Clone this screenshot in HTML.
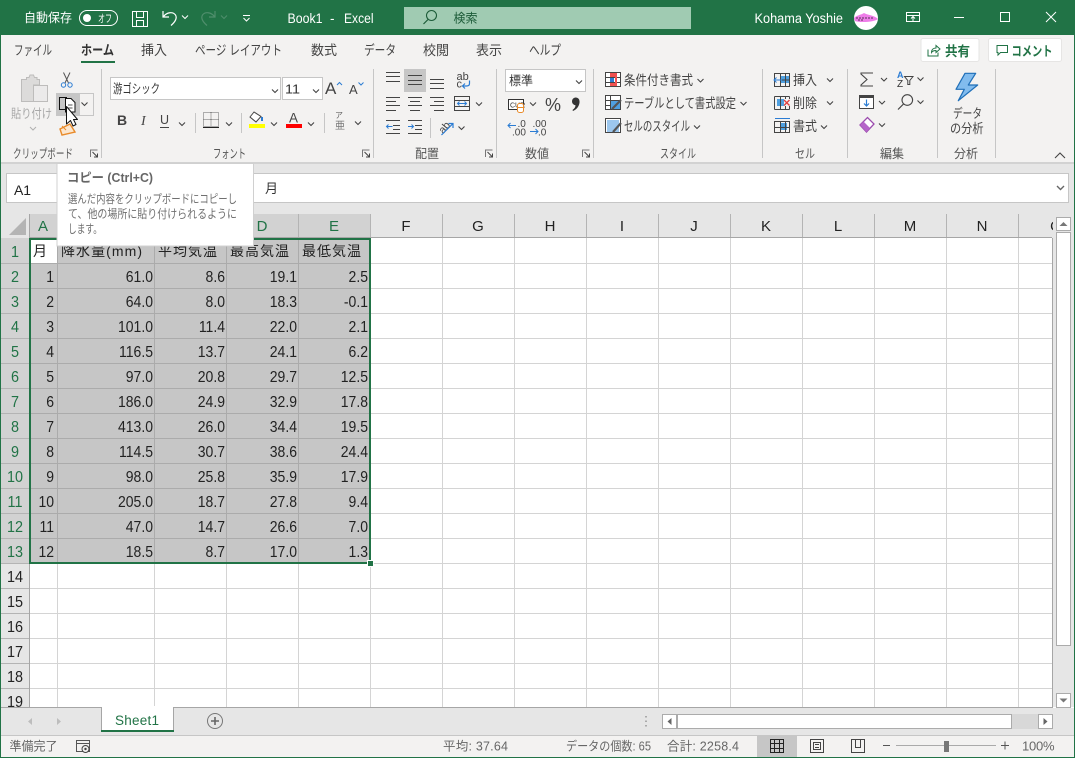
<!DOCTYPE html>
<html lang="ja"><head><meta charset="utf-8"><title>Book1 - Excel</title>
<style>
html,body{margin:0;padding:0;background:#fff}
svg{display:block}
text{font-family:"Liberation Sans","Noto Sans CJK JP",sans-serif;font-size:12px;fill:#444}
.t{font-size:13.500px;fill:#444}
.g{font-size:12.500px;fill:#555}
.w{fill:#fff}
.n{font-size:16px;fill:#222;text-anchor:end}
.h{font-size:15px;fill:#222;text-anchor:middle}
.hg{font-size:15px;fill:#217346;text-anchor:middle}
.rh{font-size:16px;fill:#222;text-anchor:middle}
.rg{font-size:16px;fill:#217346;text-anchor:middle}
.st{font-size:12.500px;fill:#666}
.c{shape-rendering:crispEdges}
</style></head><body>
<svg xmlns="http://www.w3.org/2000/svg" width="1075" height="758" viewBox="0 0 1075 758">
<defs>
<path id="v" d="M-3 -1.500L0 1.500L3 -1.500" fill="none" stroke="#444" stroke-width="1.100"/>
<g id="lau"><path d="M-3.500 3.500V-3.500H3.500" fill="none" stroke="#777"/><path d="M-1.500 -1.500L3.500 3.500M3.500 0V3.500H0" fill="none" stroke="#444"/></g>
</defs>

<!-- base regions -->
<g class="c">
<rect width="1075" height="758" fill="#fff"/>
<rect width="1075" height="35" fill="#217346"/>
<rect y="35" width="1075" height="128" fill="#f3f2f1"/>
<rect y="162" width="1075" height="2" fill="#d2d2d2"/>
<rect y="164" width="1075" height="50" fill="#e6e6e6"/>
<rect x="6.500" y="173.500" width="1062" height="29" fill="#fff" stroke="#c6c6c6"/>
<rect y="214" width="1075" height="24" fill="#e6e6e6"/>
<rect y="238" width="29" height="469" fill="#e6e6e6"/>
</g>

<!-- title bar -->
<text x="24" y="22" class="w" style="font-size:12.500px" textLength="48" lengthAdjust="spacingAndGlyphs">自動保存</text>
<rect x="79.500" y="10.500" width="38" height="15" rx="7.500" fill="none" stroke="#fff"/>
<circle cx="87" cy="18" r="4" fill="#fff"/>
<text x="98" y="22" class="w" style="font-size:10.500px" textLength="14" lengthAdjust="spacingAndGlyphs">オフ</text>
<path class="c" d="M132.500 11.500H147.500V26.500H132.500ZM136.500 11.500V17.500H143.500V11.500M136.500 26.500V20.500H143.500V26.500" fill="none" stroke="#fff"/>
<path d="M163 11V17H169M163.500 16.500C167 12 173 11.500 175.500 15C177.500 18.500 175 22 171 25.500" fill="none" stroke="#fff" stroke-width="1.200"/>
<path d="M182 15.500L185 18.500L188 15.500" fill="none" stroke="#fff"/>
<path d="M215 11V17H209M214.500 16.500C211 12 205 11.500 202.500 15C200.500 18.500 203 22 207 25.500" fill="none" stroke="#4f8e6c" stroke-width="1.200"/>
<path d="M221 15.500L224 18.500L227 15.500" fill="none" stroke="#4f8e6c"/>
<path d="M243 15.500H250M243.500 18L246.500 21L249.500 18" fill="none" stroke="#fff"/>
<text x="287.500" y="23" class="w" style="font-size:13.500px" textLength="35" lengthAdjust="spacingAndGlyphs">Book1</text>
<text x="330" y="23" class="w" style="font-size:13.500px">-</text>
<text x="344" y="23" class="w" style="font-size:13.500px" textLength="29.500" lengthAdjust="spacingAndGlyphs">Excel</text>
<rect x="404" y="7" width="287" height="22" fill="#a0cbb2" class="c"/>
<circle cx="431.500" cy="15.500" r="5" fill="none" stroke="#1d5c39" stroke-width="1.100"/>
<path d="M428 19.500L423.500 24" stroke="#1d5c39" stroke-width="1.200"/>
<text x="453.500" y="22.500" style="font-size:12.500px;fill:#1d5c39" textLength="24" lengthAdjust="spacingAndGlyphs">検索</text>
<text x="754.500" y="23" class="w" style="font-size:13.500px" textLength="88.500" lengthAdjust="spacingAndGlyphs">Kohama Yoshie</text>
<circle cx="866" cy="18" r="12" fill="#fff"/>
<path d="M854 18C857 15 861 15 864 13C867 15 874 15 878 19C875 22 860 23 855 21Z" fill="#ee7de8"/>
<path d="M856 18H874M858 20H864" stroke="#222" stroke-dasharray="2 1" stroke-width=".8"/>
<g fill="none" stroke="#fff">
<path class="c" d="M906.500 12.500H919.500V21.500H906.500ZM906.500 15.500H919.500"/>
<path d="M913 21V17M911 18.500L913 16.500L915 18.500"/>
<path class="c" d="M954 17.500H964"/>
<rect class="c" x="1000.500" y="12.500" width="9" height="9"/>
<path d="M1046 12L1056 22M1056 12L1046 22"/>
</g>

<!-- tabs -->
<text x="14" y="55" class="t" textLength="38" lengthAdjust="spacingAndGlyphs">ファイル</text>
<text x="81" y="55" class="t" style="font-weight:700;fill:#333" textLength="33" lengthAdjust="spacingAndGlyphs">ホーム</text>
<rect x="81" y="61" width="34" height="2" fill="#217346" class="c"/>
<text x="141" y="55" class="t" textLength="26" lengthAdjust="spacingAndGlyphs">挿入</text>
<text x="195" y="55" class="t" textLength="87" lengthAdjust="spacingAndGlyphs">ページ レイアウト</text>
<text x="311" y="55" class="t" textLength="26" lengthAdjust="spacingAndGlyphs">数式</text>
<text x="364" y="55" class="t" textLength="32" lengthAdjust="spacingAndGlyphs">データ</text>
<text x="423" y="55" class="t" textLength="26" lengthAdjust="spacingAndGlyphs">校閲</text>
<text x="476" y="55" class="t" textLength="26" lengthAdjust="spacingAndGlyphs">表示</text>
<text x="529" y="55" class="t" textLength="32" lengthAdjust="spacingAndGlyphs">ヘルプ</text>

<!-- share / comment -->
<rect x="921" y="38.500" width="58" height="23" rx="2" fill="#fff" stroke="#e6e5e4"/>
<rect x="988.500" y="38.500" width="73" height="23" rx="2" fill="#fff" stroke="#e6e5e4"/>
<path d="M928 49.500V56H938V52.500M931.500 52.500C931.500 49.500 933.500 48 936 48V45.500L940 49L936 52.500V50.500C934 50.500 932.500 51 931.500 52.500Z" fill="none" stroke="#217346"/>
<text x="945" y="56" style="font-size:13.500px;font-weight:700;fill:#217346" textLength="25" lengthAdjust="spacingAndGlyphs">共有</text>
<path d="M997 45.500H1007.500V52.500H1000.500L998 55V52.500H997Z" fill="none" stroke="#217346"/>
<text x="1011.500" y="56" style="font-size:13.500px;font-weight:700;fill:#217346" textLength="41" lengthAdjust="spacingAndGlyphs">コメント</text>

<!-- group separators -->
<path class="c" d="M101.500 69V158M373.500 69V158M496.500 69V158M593.500 69V158M762.500 69V158M847.500 69V158M937.500 69V158M995.500 69V158" stroke="#c6c6c6" fill="none"/>
<text x="13" y="158" class="g" textLength="60" lengthAdjust="spacingAndGlyphs">クリップボード</text>
<text x="213" y="158" class="g" textLength="33" lengthAdjust="spacingAndGlyphs">フォント</text>
<text x="415" y="158" class="g" textLength="24" lengthAdjust="spacingAndGlyphs">配置</text>
<text x="525" y="158" class="g" textLength="24" lengthAdjust="spacingAndGlyphs">数値</text>
<text x="660" y="158" class="g" textLength="36" lengthAdjust="spacingAndGlyphs">スタイル</text>
<text x="795" y="158" class="g" textLength="20" lengthAdjust="spacingAndGlyphs">セル</text>
<text x="880" y="158" class="g" textLength="24" lengthAdjust="spacingAndGlyphs">編集</text>
<text x="954" y="158" class="g" textLength="24" lengthAdjust="spacingAndGlyphs">分析</text>
<use href="#lau" x="94" y="153.500"/><use href="#lau" x="366" y="153.500"/><use href="#lau" x="489" y="153.500"/><use href="#lau" x="586" y="153.500"/>
<path d="M1055 158L1060 153L1065 158" fill="none" stroke="#444" stroke-width="1.100"/>

<!-- clipboard group -->
<path d="M21.500 79.500H26.500V77.500H29L30 75H33.500L34.500 77.500H37V79.500H39.500V85H33.500V101.500H21.500Z" fill="#dcdbda" stroke="#bdbcbb"/>
<rect x="33.500" y="85.500" width="14" height="16" fill="#ebeaea" stroke="#bdbcbb"/>
<text x="11" y="118" style="font-size:12.500px;fill:#a8a8a8" textLength="41" lengthAdjust="spacingAndGlyphs">貼り付け</text>
<path d="M30 127L33 130L36 127" fill="none" stroke="#b0b0b0"/>
<path d="M63.500 72.500L68.500 83M70 72.500L65 83" stroke="#555" fill="none"/>
<circle cx="63.500" cy="85" r="2.200" fill="none" stroke="#2b7cd3"/><circle cx="70" cy="85" r="2.200" fill="none" stroke="#2b7cd3"/>
<rect x="56" y="93" width="23" height="23" fill="#c6c6c6" class="c"/>
<rect x="79.500" y="93.500" width="14" height="22" fill="none" stroke="#c6c6c6" class="c"/>
<use href="#v" x="84.500" y="104"/>
<path class="c" d="M59.500 97.500H66.500V109.500H59.500Z" fill="none" stroke="#111"/>
<path d="M65.500 98.500H71L75 102.500V112H65.500Z" fill="#fff" stroke="#111"/>
<path d="M68 105H72.500M68 108H72.500" stroke="#555"/>
<path d="M60 129L70 124L75 132L62 135Z" fill="#fbe6ce" stroke="#e98b2a" stroke-width="1.400"/>
<path d="M66 130L62 126" stroke="#e98b2a"/>
<path d="M66.500 106.500V124L70.500 120.500L73 126L76 124.500L73.500 119.500H77.500Z" fill="#fff" stroke="#111" stroke-linejoin="round"/>

<!-- font group -->
<rect x="110.500" y="77.500" width="170" height="22" fill="#fff" stroke="#c6c6c6" class="c"/>
<rect x="282.500" y="77.500" width="40" height="22" fill="#fff" stroke="#c6c6c6" class="c"/>
<text x="113" y="93" style="font-size:12.500px;fill:#333" textLength="47" lengthAdjust="spacingAndGlyphs">游ゴシック</text>
<use href="#v" x="275" y="91"/>
<text x="285" y="93.500" style="font-size:13px;fill:#333" textLength="15" lengthAdjust="spacingAndGlyphs">11</text>
<use href="#v" x="316" y="91"/>
<text x="325" y="94" style="font-size:17px;fill:#444">A</text>
<path d="M337 85L339.500 82.500L342 85" fill="none" stroke="#2b7cd3"/>
<text x="349" y="94" style="font-size:13px;fill:#444">A</text>
<path d="M358.500 82.500L361 85L363.500 82.500" fill="none" stroke="#2b7cd3"/>
<text x="117" y="125" style="font-size:14px;font-weight:700;fill:#444">B</text>
<text x="141" y="125" style="font-size:14px;font-style:italic;fill:#444;font-family:'Liberation Serif',serif">I</text>
<text x="160" y="124" style="font-size:12.500px;fill:#444">U</text>
<path class="c" d="M160 127.500H169" stroke="#444"/>
<use href="#v" x="182" y="124"/>
<path class="c" d="M195.500 113V133M241.500 113V133M324.500 113V133" stroke="#c6c6c6"/>
<path class="c" d="M203.500 112.500H218.500V126.500H203.500ZM211 112.500V126.500M203.500 119.500H218.500" fill="none" stroke="#666" stroke-dasharray="1 1"/>
<path class="c" d="M203 127.500H219" stroke="#222"/>
<use href="#v" x="229" y="124"/>
<path d="M254 112L250 117L256 122L261 116.500Z" fill="#fff" stroke="#444"/><path d="M262 117V121" stroke="#2b7cd3" stroke-width="2"/>
<rect x="249" y="124" width="16" height="4" fill="#ff0" class="c"/>
<use href="#v" x="274" y="124"/>
<text x="289" y="122.500" style="font-size:13.500px;fill:#444">A</text>
<rect x="286" y="124" width="16" height="4" fill="#f00" class="c"/>
<use href="#v" x="311" y="124"/>
<text x="335" y="118" style="font-size:8px;fill:#666">ア</text>
<text x="335" y="129" style="font-size:10px;fill:#777">亜</text>
<use href="#v" x="358" y="123"/>

<!-- alignment -->
<rect x="404" y="69" width="22" height="23" fill="#c6c6c6" class="c"/>
<g class="c" fill="none" stroke="#444">
<path d="M386 72.500H400M386 76.500H400M386 81.500H400M408 75.500H422M408 80.500H422M408 84.500H422M430 79.500H444M430 83.500H444M430 88.500H444"/>
<path d="M386 97.500H400M386 101.500H396M386 105.500H400M386 110.500H396M408 97.500H422M410 101.500H420M408 105.500H422M410 110.500H420M430 97.500H444M434 101.500H444M430 105.500H444M434 110.500H444"/>
<path d="M386 120.500H400M393 125.500H400M393 129.500H400M386 133.500H400M408 120.500H422M415 125.500H422M415 129.500H422M408 133.500H422"/>
<path d="M430.500 118V138" stroke="#c6c6c6"/>
<path d="M454.500 96.500H469.500V110.500H454.500ZM454.500 100.500H469.500M454.500 106.500H469.500"/>
</g>
<path d="M457.500 103.500H466.500M459.500 101.500L457.500 103.500L459.500 105.500M464.500 101.500L466.500 103.500L464.500 105.500" stroke="#2b7cd3" fill="none"/>
<use href="#v" x="479" y="104"/>
<text x="456.500" y="80" style="font-size:11px;fill:#444">ab</text>
<text x="456.500" y="87.500" style="font-size:11px;fill:#444">c</text>
<path d="M469.500 80.500V83.500C469.500 85.500 468 86 466.500 86H463M465 83.500L462.500 86L465 88.500" fill="none" stroke="#2b7cd3" stroke-width="1.200"/>
<path d="M386.500 126.500H392.500M388.500 124.500L386.500 126.500L388.500 128.500M413.500 126.500H408M411.500 124.500L413.500 126.500L411.500 128.500" stroke="#2b7cd3" fill="none"/>
<text x="438" y="131" style="font-size:10.500px;fill:#444" transform="rotate(-50 444 127)">ab</text>
<path d="M441.500 135L453 123.500M448.500 123.500H453V128" fill="none" stroke="#2b7cd3" stroke-width="1.200"/>
<use href="#v" x="461.500" y="128"/>

<!-- number -->
<rect x="505.500" y="69.500" width="80" height="22" fill="#fff" stroke="#c6c6c6" class="c"/>
<text x="509" y="85" style="font-size:12.500px;fill:#333" textLength="24" lengthAdjust="spacingAndGlyphs">標準</text>
<use href="#v" x="579" y="82"/>
<rect x="508.500" y="99.500" width="15" height="10" fill="#fff" stroke="#333" class="c"/>
<text x="510" y="107.500" style="font-size:7px;fill:#333">CUR</text>
<rect x="517.500" y="103.500" width="6" height="9" rx="2" fill="#fff" stroke="#e98b2a"/>
<path d="M518 107.500H523" stroke="#e98b2a"/>
<use href="#v" x="533" y="104"/>
<text x="545" y="111" style="font-size:18px;fill:#444">%</text>
<path d="M572 101.500A3.700 3.700 0 0 1 579.500 101C580 105 577 109.500 573 111L572.500 110C574.500 108.500 575.500 107 575.500 105.200A3.700 3.700 0 0 1 572 101.500Z" fill="#333"/>
<text x="517.500" y="127" style="font-size:10px;fill:#444">.0</text>
<text x="512" y="135.500" style="font-size:10px;fill:#444">.00</text>
<path d="M508 125.500H516M510.500 123L508 125.500L510.500 128" stroke="#2b7cd3" fill="none"/>
<text x="532.500" y="127" style="font-size:10px;fill:#444">.00</text>
<text x="538" y="135.500" style="font-size:10px;fill:#444">.0</text>
<path d="M530 131.500H538M535.500 129L538 131.500L535.500 134" stroke="#2b7cd3" fill="none"/>

<!-- styles -->
<g class="c">
<rect x="605.500" y="72.500" width="15" height="14" fill="#fff" stroke="#444"/>
<path d="M610.500 72.500V86.500M615.500 72.500V86.500M605.500 77.500H620.500M605.500 82.500H620.500" stroke="#444"/>
<rect x="610" y="73" width="7" height="4" fill="#f05050"/><rect x="610" y="83" width="7" height="3" fill="#f05050"/><rect x="615" y="73" width="2" height="13" fill="#f05050"/><rect x="610" y="78" width="4" height="4" fill="#2b7cd3"/>
<rect x="605.500" y="95.500" width="15" height="14" fill="#fff" stroke="#444"/>
<path d="M610.500 95.500V109.500M605.500 100.500H620.500M605.500 105.500H620.500" stroke="#444"/>
<rect x="611" y="101" width="9" height="8" fill="#4fa0e0"/>
<rect x="605.500" y="118.500" width="15" height="14" fill="#fff" stroke="#444"/>
<rect x="607" y="120" width="12" height="12" fill="#9cc7ee"/>
</g>
<path d="M612 109L621 100M613 132L621 123" stroke="#555" stroke-width="2.200"/>
<text x="624" y="85" class="t" textLength="69" lengthAdjust="spacingAndGlyphs">条件付き書式</text><use href="#v" x="700.500" y="80.500"/>
<text x="624" y="108" class="t" textLength="112" lengthAdjust="spacingAndGlyphs">テーブルとして書式設定</text><use href="#v" x="743.500" y="103.500"/>
<text x="624" y="131" class="t" textLength="66" lengthAdjust="spacingAndGlyphs">セルのスタイル</text><use href="#v" x="697" y="127"/>

<!-- cells -->
<rect x="781" y="76" width="8" height="7" fill="#4fa0e0" class="c"/>
<rect x="777" y="99" width="7" height="7" fill="#4fa0e0" class="c"/>
<rect x="780" y="123" width="7" height="7" fill="#4fa0e0" class="c"/>
<g class="c" fill="none" stroke="#444">
<path d="M774.500 73.500H789.500V86.500H774.500ZM774.500 80H789.500M780.500 73.500V86.500M785.500 73.500V86.500"/>
<path d="M774.500 96.500H789.500M774.500 109.500H789.500M774.500 96.500V109.500M780.500 96.500V109.500M785.500 96.500V99M785.500 106V109.500M789.500 106V109.500M789.500 96.500V99"/>
<path d="M774.500 121.500H789.500V132.500H774.500ZM774.500 127.500H789.500M780.500 121.500V132.500M785.500 121.500V132.500"/>
<path d="M775 118.500H790" stroke="#2b7cd3"/>
</g>
<path d="M782 80H774M776.500 77.500L774 80L776.500 82.500" stroke="#2b7cd3" fill="none"/>
<path d="M784 100L789.500 105.500M789.500 100L784 105.500" stroke="#e04040" stroke-width="1.300"/>
<text x="793" y="85" class="t" textLength="24" lengthAdjust="spacingAndGlyphs">挿入</text><use href="#v" x="830" y="80"/>
<text x="793" y="108" class="t" textLength="24" lengthAdjust="spacingAndGlyphs">削除</text><use href="#v" x="830" y="103"/>
<text x="793" y="131" class="t" textLength="24" lengthAdjust="spacingAndGlyphs">書式</text><use href="#v" x="824" y="127"/>

<!-- editing -->
<path d="M873 73H861V74L867 79.500L861 85V86H873" fill="none" stroke="#444" stroke-width="1.100"/>
<use href="#v" x="884" y="79.500"/>
<text x="897" y="78" style="font-size:9px;font-weight:700;fill:#2b7cd3">A</text>
<text x="897" y="87" style="font-size:10px;fill:#333">Z</text>
<path d="M904.500 76.500H913L909.800 80.500V84.500H907.800V80.500Z" fill="none" stroke="#444"/>
<use href="#v" x="920.500" y="79"/>
<rect x="859.500" y="95.500" width="14" height="13" fill="#fff" stroke="#444" class="c"/>
<path class="c" d="M860 97H873" stroke="#444" stroke-width="2"/>
<path d="M866.500 99.500V106M864 103.500L866.500 106L869 103.500" fill="none" stroke="#2b7cd3" stroke-width="1.200"/>
<use href="#v" x="882" y="102.500"/>
<circle cx="907.300" cy="100" r="5.300" fill="none" stroke="#444" stroke-width="1.100"/><path d="M903.500 104L898 109.500" stroke="#444" stroke-width="1.200"/>
<use href="#v" x="920.500" y="102"/>
<path d="M860 125L867.500 117.500L874 124L866.500 132Z" fill="#fff" stroke="#9b4bae" stroke-width="1.300"/>
<path d="M860 125L863.500 121.500L870 128L866.500 132Z" fill="#b566c9"/>
<use href="#v" x="882" y="125"/>

<!-- analysis -->
<path d="M965 73.300H975.700L968.300 85H977.700L958.300 100.700L964.300 89.300H956Z" fill="#82bcee" stroke="#1f6fb8" stroke-width="1.200" stroke-linejoin="round"/>
<text x="953" y="118" class="t" style="font-size:13px" textLength="29" lengthAdjust="spacingAndGlyphs">データ</text>
<text x="950" y="133" class="t" style="font-size:13px" textLength="33.500" lengthAdjust="spacingAndGlyphs">の分析</text>

<!-- formula -->
<text x="14" y="195" style="font-size:14px;fill:#222" textLength="17">A1</text>
<text x="265" y="193" style="font-size:13px;fill:#333">月</text>
<path d="M1057 186L1060.500 189.500L1064 186" fill="none" stroke="#666" stroke-width="1.400"/>

<!-- headers -->
<path d="M26 218V235H9Z" fill="#b4b4b4"/>
<g class="c">
<rect x="29" y="214" width="341" height="24" fill="#d2d2d2"/>
<rect x="0" y="238" width="29" height="325" fill="#d2d2d2"/>
<path d="M57.500 214V238M154.500 214V238M226.500 214V238M298.500 214V238M370.500 214V238M442.500 214V238M514.500 214V238M586.500 214V238M658.500 214V238M730.500 214V238M802.500 214V238M874.500 214V238M946.500 214V238M1018.500 214V238" stroke="#b4b4b4"/>
<path d="M0 263.500H29M0 288.500H29M0 313.500H29M0 338.500H29M0 363.500H29M0 388.500H29M0 413.500H29M0 438.500H29M0 463.500H29M0 488.500H29M0 513.500H29M0 538.500H29M0 563.500H29M0 588.500H29M0 613.500H29M0 638.500H29M0 663.500H29M0 688.500H29" stroke="#b4b4b4"/>
<path d="M29 237.500H1052M29.500 214V707" stroke="#a6a6a6"/>
</g>
<text x="43" y="231" class="hg">A</text><text x="262" y="231" class="hg">D</text><text x="334" y="231" class="hg">E</text>
<text x="406" y="231" class="h">F</text><text x="478" y="231" class="h">G</text><text x="550" y="231" class="h">H</text><text x="622" y="231" class="h">I</text><text x="694" y="231" class="h">J</text><text x="766" y="231" class="h">K</text><text x="838" y="231" class="h">L</text><text x="910" y="231" class="h">M</text><text x="982" y="231" class="h">N</text><text x="1056" y="231" class="h">O</text>
<g transform="translate(15 1) scale(.9 1)">
<text y="256" class="rg">1</text><text y="281" class="rg">2</text><text y="306" class="rg">3</text><text y="331" class="rg">4</text><text y="356" class="rg">5</text><text y="381" class="rg">6</text><text y="406" class="rg">7</text><text y="431" class="rg">8</text><text y="456" class="rg">9</text><text y="481" class="rg">10</text><text y="506" class="rg">11</text><text y="531" class="rg">12</text><text y="556" class="rg">13</text>
<text y="581" class="rh">14</text><text y="606" class="rh">15</text><text y="631" class="rh">16</text><text y="656" class="rh">17</text><text y="681" class="rh">18</text><text y="706" class="rh">19</text>
</g>

<!-- grid -->
<g class="c">
<path d="M57.500 238V707M154.500 238V707M226.500 238V707M298.500 238V707M370.500 238V707M442.500 238V707M514.500 238V707M586.500 238V707M658.500 238V707M730.500 238V707M802.500 238V707M874.500 238V707M946.500 238V707M1018.500 238V707M30 263.500H1052M30 288.500H1052M30 313.500H1052M30 338.500H1052M30 363.500H1052M30 388.500H1052M30 413.500H1052M30 438.500H1052M30 463.500H1052M30 488.500H1052M30 513.500H1052M30 538.500H1052M30 563.500H1052M30 588.500H1052M30 613.500H1052M30 638.500H1052M30 663.500H1052M30 688.500H1052" stroke="#d4d4d4"/>
<rect x="30" y="239" width="340" height="324" fill="#c6c6c6"/>
<rect x="31" y="240" width="26" height="23" fill="#fff"/>
<path d="M57.500 239V563M154.500 239V563M226.500 239V563M298.500 239V563M30 263.500H370M30 288.500H370M30 313.500H370M30 338.500H370M30 363.500H370M30 388.500H370M30 413.500H370M30 438.500H370M30 463.500H370M30 488.500H370M30 513.500H370M30 538.500H370" stroke="#ababab"/>
<rect x="29" y="238" width="342" height="2" fill="#217346"/>
<rect x="29" y="562" width="342" height="2" fill="#217346"/>
<rect x="29" y="238" width="2" height="326" fill="#217346"/>
<rect x="369" y="238" width="2" height="326" fill="#217346"/>
<rect x="367.500" y="560.500" width="6" height="6" fill="#217346" stroke="#fff"/>
</g>

<!-- cell values -->
<text x="33" y="256" style="font-size:14px;fill:#222">月</text>
<text x="61" y="256" style="font-size:14px;fill:#222" textLength="81" lengthAdjust="spacing">降水量(mm)</text>
<text x="158" y="256" style="font-size:14px;fill:#222" textLength="59" lengthAdjust="spacing">平均気温</text>
<text x="230" y="256" style="font-size:14px;fill:#222" textLength="59" lengthAdjust="spacing">最高気温</text>
<text x="302" y="256" style="font-size:14px;fill:#222" textLength="59" lengthAdjust="spacing">最低気温</text>

<g transform="translate(54 1) scale(.875 1)"><text y="281" class="n">1</text><text y="306" class="n">2</text><text y="331" class="n">3</text><text y="356" class="n">4</text><text y="381" class="n">5</text><text y="406" class="n">6</text><text y="431" class="n">7</text><text y="456" class="n">8</text><text y="481" class="n">9</text><text y="506" class="n">10</text><text y="531" class="n">11</text><text y="556" class="n">12</text></g>
<g transform="translate(153 1) scale(.875 1)"><text y="281" class="n">61.0</text><text y="306" class="n">64.0</text><text y="331" class="n">101.0</text><text y="356" class="n">116.5</text><text y="381" class="n">97.0</text><text y="406" class="n">186.0</text><text y="431" class="n">413.0</text><text y="456" class="n">114.5</text><text y="481" class="n">98.0</text><text y="506" class="n">205.0</text><text y="531" class="n">47.0</text><text y="556" class="n">18.5</text></g>
<g transform="translate(225 1) scale(.875 1)"><text y="281" class="n">8.6</text><text y="306" class="n">8.0</text><text y="331" class="n">11.4</text><text y="356" class="n">13.7</text><text y="381" class="n">20.8</text><text y="406" class="n">24.9</text><text y="431" class="n">26.0</text><text y="456" class="n">30.7</text><text y="481" class="n">25.8</text><text y="506" class="n">18.7</text><text y="531" class="n">14.7</text><text y="556" class="n">8.7</text></g>
<g transform="translate(297 1) scale(.875 1)"><text y="281" class="n">19.1</text><text y="306" class="n">18.3</text><text y="331" class="n">22.0</text><text y="356" class="n">24.1</text><text y="381" class="n">29.7</text><text y="406" class="n">32.9</text><text y="431" class="n">34.4</text><text y="456" class="n">38.6</text><text y="481" class="n">35.9</text><text y="506" class="n">27.8</text><text y="531" class="n">26.6</text><text y="556" class="n">17.0</text></g>
<g transform="translate(368 1) scale(.875 1)"><text y="281" class="n">2.5</text><text y="306" class="n">-0.1</text><text y="331" class="n">2.1</text><text y="356" class="n">6.2</text><text y="381" class="n">12.5</text><text y="406" class="n">17.8</text><text y="431" class="n">19.5</text><text y="456" class="n">24.4</text><text y="481" class="n">17.9</text><text y="506" class="n">9.4</text><text y="531" class="n">7.0</text><text y="556" class="n">1.3</text></g>

<!-- tooltip -->
<rect x="57" y="163.500" width="196.500" height="82.500" fill="#fff" stroke="#d0d0d0" class="c"/>
<text x="67" y="182" style="font-size:12.500px;font-weight:700;fill:#666" textLength="86" lengthAdjust="spacingAndGlyphs">コピー (Ctrl+C)</text>
<text x="68" y="203" style="font-size:12px;fill:#707070" textLength="169" lengthAdjust="spacingAndGlyphs">選んだ内容をクリップボードにコピーし</text>
<text x="68" y="218" style="font-size:12px;fill:#707070" textLength="169" lengthAdjust="spacingAndGlyphs">て、他の場所に貼り付けられるように</text>
<text x="68" y="233" style="font-size:12px;fill:#707070" textLength="34" lengthAdjust="spacingAndGlyphs">します。</text>

<!-- vertical scrollbar -->
<g class="c">
<rect x="1053" y="214" width="22" height="493" fill="#e6e6e6"/>
<path d="M1052.500 238V707" stroke="#a6a6a6"/>
<rect x="1056.500" y="217.500" width="14" height="13" fill="#fff" stroke="#ababab"/>
<rect x="1056.500" y="232.500" width="14" height="413" fill="#fff" stroke="#ababab"/>
<rect x="1056.500" y="693.500" width="14" height="14" fill="#fff" stroke="#ababab"/>
</g>
<path d="M1059.500 226L1063.500 222L1067.500 226Z" fill="#777"/><path d="M1059.500 698.500L1063.500 702.500L1067.500 698.500Z" fill="#777"/>

<!-- sheet tabs -->
<g class="c">
<rect y="708" width="1075" height="28" fill="#e6e6e6"/>
<rect x="0" y="707" width="1053" height="1" fill="#a6a6a6"/>
<rect x="101.500" y="707.500" width="72" height="24" fill="#fff" stroke="#a6a6a6"/>
<rect x="102" y="706" width="71" height="3" fill="#fff"/>
<rect x="101" y="730" width="73" height="2" fill="#217346"/>
<rect y="735" width="1075" height="1" fill="#c6c6c6"/>
<rect y="736" width="1075" height="21" fill="#f3f2f1"/>
<rect y="757" width="1075" height="1" fill="#217346"/>
<rect x="0" y="35" width="1" height="723" fill="#217346"/>
<rect x="1074" y="35" width="1" height="723" fill="#217346"/>
</g>
<path d="M32 718L28 721.500L32 725ZM57 718L61 721.500L57 725Z" fill="#bdbdbd"/>
<text x="115" y="725" style="font-size:13.500px;fill:#217346" textLength="44" lengthAdjust="spacing">Sheet1</text>
<circle cx="215" cy="721" r="7.500" fill="none" stroke="#777"/>
<path d="M211 721H219M215 717V725" stroke="#666" stroke-width="1.600"/>
<path d="M646 716v1.500M646 720.500v1.500M646 725v1.500" stroke="#aaa" stroke-width="2"/>
<g class="c">
<rect x="662.500" y="714.500" width="14" height="14" fill="#fff" stroke="#ababab"/>
<rect x="677.500" y="714.500" width="334" height="14" fill="#fff" stroke="#ababab"/>
<rect x="1012" y="714" width="26" height="15" fill="#d8d8d8"/>
<rect x="1038.500" y="714.500" width="14" height="14" fill="#fff" stroke="#ababab"/>
</g>
<path d="M671.500 718L667.500 721.500L671.500 725ZM1043.500 718L1047.500 721.500L1043.500 725Z" fill="#666"/>

<!-- status bar -->
<text x="9.500" y="750.500" class="st" textLength="48" lengthAdjust="spacingAndGlyphs">準備完了</text>
<path class="c" d="M76.500 740.500H89.500V751.500H76.500ZM76.500 743.500H89.500" fill="none" stroke="#555"/>
<circle cx="85.500" cy="749" r="3.500" fill="#f3f2f1" stroke="#444"/><circle cx="85.500" cy="749" r="1.200" fill="#444"/>
<text x="443" y="750.500" class="st" textLength="65" lengthAdjust="spacing">平均: 37.64</text>
<text x="566" y="750.500" class="st" textLength="85" lengthAdjust="spacingAndGlyphs">データの個数: 65</text>
<text x="667" y="750.500" class="st" textLength="72" lengthAdjust="spacing">合計: 2258.4</text>
<g class="c">
<rect x="757" y="736" width="40" height="21" fill="#c6c6c6"/>
<path d="M770.500 739.500H783.500V752.500H770.500ZM774.500 739.500V752.500M779.500 739.500V752.500M770.500 743.500H783.500M770.500 748.500H783.500" fill="none" stroke="#222"/>
<path d="M810.500 739.500H823.500V752.500H810.500ZM813.500 742.500H820.500V749.500H813.500ZM815 744.500H819M815 747.500H819" fill="none" stroke="#444"/>
<path d="M851.500 739.500H864.500V752.500H851.500ZM855.500 739.500V747.500H860.500V739.500" fill="none" stroke="#444"/>
<path d="M883 745.500H890M1001 745.500H1009M1005 741.500V749.500" stroke="#555"/>
<rect x="896" y="745" width="100" height="1" fill="#aaa"/>
<rect x="944" y="741" width="5" height="11" fill="#777"/>
</g>
<text x="1022" y="750.500" class="st" style="font-size:13px" textLength="32.500" lengthAdjust="spacing">100%</text>
</svg>
</body></html>
